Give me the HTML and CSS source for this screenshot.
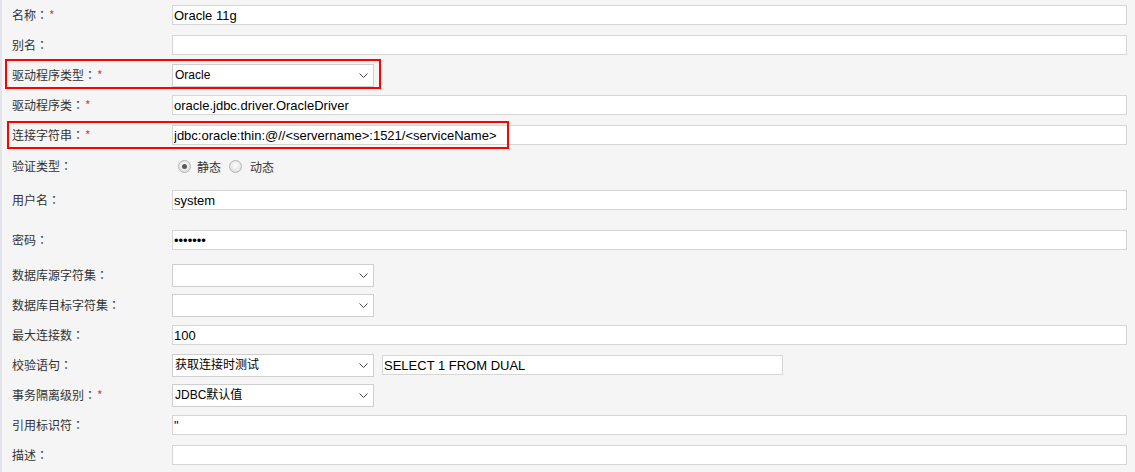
FILE: index.html
```html
<!DOCTYPE html>
<html lang="zh-CN">
<head>
    <meta charset="UTF-8">
    <title>数据连接</title>
    <link rel="stylesheet" href="styles.css">
</head>
<body>
    <form class="conn-form">
        <div class="row">
            <label class="lbl">名称<b class="colon" lang="zh-TW">：</b><i class="req">*</i></label>
            <input class="txt" type="text" value="Oracle 11g">
        </div>
        <div class="row">
            <label class="lbl">别名<b class="colon" lang="zh-TW">：</b></label>
            <input class="txt" type="text" value="">
        </div>
        <div class="row">
            <span class="mark mark-driver"></span>
            <label class="lbl">驱动程序类型<b class="colon" lang="zh-TW">：</b><i class="req">*</i></label>
            <span class="sel">
                <select><option>Oracle</option></select>
                <svg class="arrow" width="9" height="6" viewBox="0 0 9 6"><path d="M0.5 0.5 L4.5 4.5 L8.5 0.5" fill="none" stroke="#444" stroke-width="1"/></svg>
            </span>
        </div>
        <div class="row">
            <label class="lbl">驱动程序类<b class="colon" lang="zh-TW">：</b><i class="req">*</i></label>
            <input class="txt" type="text" value="oracle.jdbc.driver.OracleDriver">
        </div>
        <div class="row">
            <span class="mark mark-url"></span>
            <label class="lbl">连接字符串<b class="colon" lang="zh-TW">：</b><i class="req">*</i></label>
            <input class="txt" type="text" value="jdbc:oracle:thin:@//<servername>:1521/<serviceName>">
        </div>
        <div class="row row-auth">
            <label class="lbl">验证类型<b class="colon" lang="zh-TW">：</b></label>
            <label class="radio first"><input type="radio" name="auth" checked><span>静态</span></label>
            <label class="radio"><input type="radio" name="auth"><span>动态</span></label>
        </div>
        <div class="row row-user">
            <label class="lbl">用户名<b class="colon" lang="zh-TW">：</b></label>
            <input class="txt" type="text" value="system">
        </div>
        <div class="row row-pass">
            <label class="lbl">密码<b class="colon" lang="zh-TW">：</b></label>
            <input class="txt" type="password" value="1234567">
        </div>
        <div class="row">
            <label class="lbl">数据库源字符集<b class="colon" lang="zh-TW">：</b></label>
            <span class="sel">
                <select><option></option></select>
                <svg class="arrow" width="9" height="6" viewBox="0 0 9 6"><path d="M0.5 0.5 L4.5 4.5 L8.5 0.5" fill="none" stroke="#444" stroke-width="1"/></svg>
            </span>
        </div>
        <div class="row">
            <label class="lbl">数据库目标字符集<b class="colon" lang="zh-TW">：</b></label>
            <span class="sel">
                <select><option></option></select>
                <svg class="arrow" width="9" height="6" viewBox="0 0 9 6"><path d="M0.5 0.5 L4.5 4.5 L8.5 0.5" fill="none" stroke="#444" stroke-width="1"/></svg>
            </span>
        </div>
        <div class="row">
            <label class="lbl">最大连接数<b class="colon" lang="zh-TW">：</b></label>
            <input class="txt" type="text" value="100">
        </div>
        <div class="row">
            <label class="lbl">校验语句<b class="colon" lang="zh-TW">：</b></label>
            <span class="sel">
                <select><option>获取连接时测试</option></select>
                <svg class="arrow" width="9" height="6" viewBox="0 0 9 6"><path d="M0.5 0.5 L4.5 4.5 L8.5 0.5" fill="none" stroke="#444" stroke-width="1"/></svg>
            </span>
            <input class="txt sql" type="text" value="SELECT 1 FROM DUAL">
        </div>
        <div class="row">
            <label class="lbl">事务隔离级别<b class="colon" lang="zh-TW">：</b><i class="req">*</i></label>
            <span class="sel">
                <select><option>JDBC默认值</option></select>
                <svg class="arrow" width="9" height="6" viewBox="0 0 9 6"><path d="M0.5 0.5 L4.5 4.5 L8.5 0.5" fill="none" stroke="#444" stroke-width="1"/></svg>
            </span>
        </div>
        <div class="row">
            <label class="lbl">引用标识符<b class="colon" lang="zh-TW">：</b></label>
            <input class="txt" type="text" value="&quot;">
        </div>
        <div class="row">
            <label class="lbl">描述<b class="colon" lang="zh-TW">：</b></label>
            <input class="txt" type="text" value="">
        </div>
    </form>
</body>
</html>
```

FILE: styles.css
```css
body {
    margin: 0;
    background-color: #f5f5f5;
    border-left: 2px solid #e3e3ec;
    font-family: "Noto Sans CJK SC", "Liberation Sans", sans-serif;
    font-size: 12px;
    color: #333;
    min-height: 472px;
    box-sizing: border-box;
}
.conn-form {
    padding-right: 8px;
}
.row {
    position: relative;
    display: flex;
    align-items: center;
    height: 30px;
}
.row-auth {
    margin-top: 1px;
}
.row-user {
    margin-top: 4px;
}
.row-pass {
    margin-top: 10px;
}
.row-pass + .row {
    margin-top: 5px;
}
.lbl {
    width: 170px;
    padding-left: 10px;
    box-sizing: border-box;
    flex: none;
    line-height: 16px;
}
/* 全角冒号居中显示 */
.colon {
    font-weight: normal;
    font-family: "Noto Sans CJK TC", sans-serif;
}
.req {
    font-style: normal;
    color: #e4393c;
    margin-left: 1px;
}
.txt {
    flex: 1;
    height: 20px;
    box-sizing: border-box;
    border: 1px solid #d6d6d6;
    background-color: #fff;
    padding: 0 1px;
    margin: 0;
    font-family: "Liberation Sans", "Noto Sans CJK SC", sans-serif;
    font-size: 13px;
    color: #000;
    outline: none;
}
.sql {
    flex: none;
    width: 401px;
    margin-left: 8px;
}
.sel {
    position: relative;
    display: inline-block;
    width: 202px;
    height: 23px;
    flex: none;
}
.sel select {
    appearance: none;
    -webkit-appearance: none;
    width: 100%;
    height: 100%;
    box-sizing: border-box;
    border: 1px solid #cfcfcf;
    border-radius: 0;
    background-color: #fff;
    padding: 0 2px;
    margin: 0;
    font-family: "Liberation Sans", "Noto Sans CJK SC", sans-serif;
    font-size: 12px;
    color: #000;
    outline: none;
}
.sel .arrow {
    position: absolute;
    right: 6px;
    top: 9px;
    pointer-events: none;
}
.radio {
    display: flex;
    align-items: center;
    margin-left: 8px;
}
.radio.first {
    margin-left: 6px;
}
.radio input {
    appearance: none;
    -webkit-appearance: none;
    width: 13px;
    height: 13px;
    margin: 0 8px 0 0;
    border: 1px solid #b4b4b4;
    border-radius: 50%;
    box-sizing: border-box;
    background: radial-gradient(circle at 50% 40%, #ffffff 0%, #e6e6e6 60%, #d2d2d2 100%);
    position: relative;
}
.radio.first input {
    margin-right: 6px;
}
.radio input:checked::after {
    content: "";
    position: absolute;
    left: 3px;
    top: 3px;
    width: 5px;
    height: 5px;
    border-radius: 50%;
    background-color: #5a5a5a;
}
.mark {
    position: absolute;
    border: 2px solid #f00;
    box-sizing: border-box;
    pointer-events: none;
    z-index: 2;
}
.mark-driver {
    left: 3px;
    top: -1px;
    width: 376px;
    height: 30px;
}
.mark-url {
    left: 5px;
    top: 1px;
    width: 502px;
    height: 28px;
}
```
